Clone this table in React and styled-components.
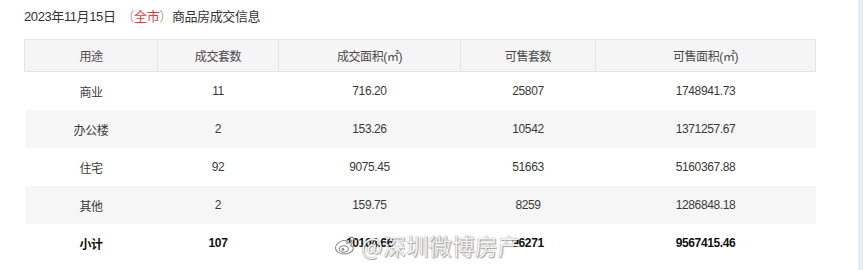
import React from "react";
import styled, { createGlobalStyle } from "styled-components";

const GlobalStyle = createGlobalStyle`
  html, body {
    margin: 0;
    padding: 0;
    background: #fff;
  }
  body {
    font-family: "Liberation Sans", "Noto Sans CJK SC", sans-serif;
    color: #333;
  }
`;

const Page = styled.div`
  display: flex;
  height: 270px;
  overflow: hidden;
`;

const Main = styled.div`
  position: relative;
  flex: 1;
  padding: 8px 0 0 24px;
`;

const SideStrip = styled.div`
  width: 5px;
  background: #e9eef4;
`;

const Title = styled.div`
  font-size: 13px;
  line-height: 18px;
  letter-spacing: -0.4px;
  color: #333;
  margin-bottom: 13px;
`;

const Gap = styled.span`
  display: inline-block;
  width: 6px;
`;

const Paren = styled.span`
  color: #b9a0a0;
`;

const City = styled.span`
  color: #e4393c;
`;

const Table = styled.table`
  width: 791px;
  border-collapse: collapse;
  table-layout: fixed;
  font-size: 12px;
  letter-spacing: -0.4px;
`;

const Col = styled.col`
  width: ${(p) => p.$w}px;
`;

const HeadCell = styled.th`
  height: 31px;
  padding: 0;
  background: #f5f5f5;
  border: 1px solid #e4e4e4;
  font-weight: normal;
  color: #4a4a4a;
  text-align: center;
`;

const Row = styled.tr`
  background: ${(p) => (p.$striped ? "#f6f6f6" : "#fff")};
`;

const Cell = styled.td`
  height: 38px;
  padding: 0;
  text-align: center;
  color: ${(p) => (p.$bold ? "#111" : "#3a3a3a")};
  font-weight: ${(p) => (p.$bold ? "bold" : "normal")};
`;

const Watermark = styled.div`
  position: absolute;
  left: 334px;
  top: 232px;
  display: flex;
  align-items: center;
  gap: 3px;
  pointer-events: none;
`;

const WatermarkText = styled.span`
  font-family: "Noto Sans CJK SC", sans-serif;
  font-size: 23px;
  line-height: 26px;
  letter-spacing: 0;
  color: rgba(255, 255, 255, 0.92);
  text-shadow: 0 0 1px #777, 1px 1px 1px rgba(0, 0, 0, 0.35);
`;

const columns = [
  { title: "用途", w: 133 },
  { title: "成交套数", w: 121 },
  { title: "成交面积(㎡)", w: 182 },
  { title: "可售套数", w: 135 },
  { title: "可售面积(㎡)", w: 220 },
];

const rows = [
  ["商业", "11", "716.20", "25807", "1748941.73"],
  ["办公楼", "2", "153.26", "10542", "1371257.67"],
  ["住宅", "92", "9075.45", "51663", "5160367.88"],
  ["其他", "2", "159.75", "8259", "1286848.18"],
];

const total = ["小计", "107", "10104.66", "96271", "9567415.46"];

const WeiboLogo = () => (
  <svg width="24" height="22" viewBox="0 0 24 22">
    <path
      d="M9.5 6.5C5.5 7 1.5 10.5 1.5 14c0 3.6 4.2 6 9 6s8.8-2.6 8.8-5.6c0-1.8-1.5-2.4-2.4-2.6.5-1.1.5-2.4-.6-2.9-1-.4-2.6.2-3.2.5.2-1.2.1-3.3-3.6-2.9z"
      fill="rgba(255,255,255,0.92)"
      stroke="#8a8a8a"
      strokeWidth="1.1"
    />
    <ellipse cx="9.8" cy="15" rx="4.6" ry="3.2" fill="none" stroke="#8a8a8a" strokeWidth="1.1" />
    <circle cx="9" cy="15.3" r="1.4" fill="#8a8a8a" />
    <path d="M16 3.2c2.8-.4 5.2 2 4.6 4.8" fill="none" stroke="#8a8a8a" strokeWidth="1.3" strokeLinecap="round" />
    <path d="M15.8 6c1.3-.2 2.3.9 2 2.1" fill="none" stroke="#8a8a8a" strokeWidth="1.2" strokeLinecap="round" />
  </svg>
);

export default function App() {
  return (
    <>
      <GlobalStyle />
      <Page>
        <Main>
          <Title>
            2023年11月15日<Gap />
            <Paren>（</Paren>
            <City>全市</City>
            <Paren>）</Paren>商品房成交信息
          </Title>
          <Table>
            <colgroup>
              {columns.map((c) => (
                <Col key={c.title} $w={c.w} />
              ))}
            </colgroup>
            <thead>
              <tr>
                {columns.map((c) => (
                  <HeadCell key={c.title}>{c.title}</HeadCell>
                ))}
              </tr>
            </thead>
            <tbody>
              {rows.map((r, i) => (
                <Row key={r[0]} $striped={i % 2 === 1}>
                  {r.map((v, j) => (
                    <Cell key={j}>{v}</Cell>
                  ))}
                </Row>
              ))}
              <Row>
                {total.map((v, j) => (
                  <Cell key={j} $bold>
                    {v}
                  </Cell>
                ))}
              </Row>
            </tbody>
          </Table>
          <Watermark>
            <WeiboLogo />
            <WatermarkText>@深圳微博房产</WatermarkText>
          </Watermark>
        </Main>
        <SideStrip />
      </Page>
    </>
  );
}
